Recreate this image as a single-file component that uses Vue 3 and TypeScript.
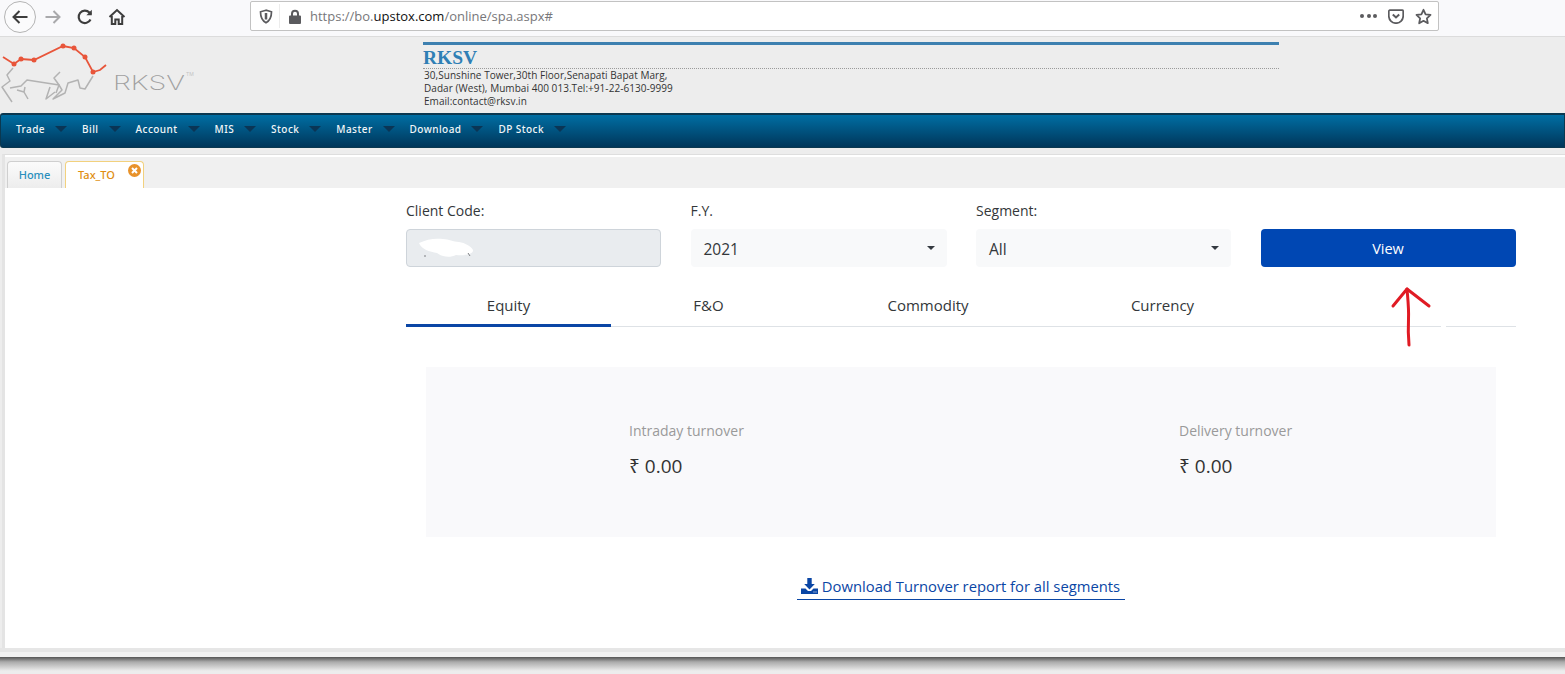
<script setup lang="ts">
const menuItems = ['Trade', 'Bill', 'Account', 'MIS', 'Stock', 'Master', 'Download', 'DP Stock']
const tabs = ['Equity', 'F&O', 'Commodity', 'Currency']
const turnovers = [
  { label: 'Intraday turnover', value: '₹ 0.00' },
  { label: 'Delivery turnover', value: '₹ 0.00' },
]
</script>

<template>
  <div class="page">
    <div class="browser-bar">
      <div class="nav-buttons">
        <span class="back-button">
          <svg width="18" height="18" viewBox="0 0 18 18" fill="none" stroke="#3d3d3d" stroke-width="2">
            <path d="M16.500 9H2.500M8.500 3 2.500 9l6 6" />
          </svg>
        </span>
        <svg class="forward" width="18" height="18" viewBox="0 0 18 18" fill="none" stroke="#a9a9ab" stroke-width="2">
          <path d="M1.500 9h14M9.500 3l6 6-6 6" />
        </svg>
        <svg class="reload" width="18" height="18" viewBox="0 0 18 18" fill="none" stroke="#3d3d3d" stroke-width="2.200">
          <path d="M14.500 11.500A6.200 6.200 0 1 1 13.400 4.600L15 6" />
          <path d="M15.800 1.800v5.400h-5.400z" fill="#3d3d3d" stroke="none" />
        </svg>
        <svg class="home" width="18" height="18" viewBox="0 0 18 18" fill="none" stroke="#3d3d3d" stroke-width="2">
          <path d="M1.500 9 9 2l7.500 7" />
          <path d="M3.800 8v8h3.500v-4.500h3.400V16h3.500V8" />
        </svg>
      </div>
      <div class="url-bar">
        <svg class="shield" width="14" height="15" viewBox="0 0 14 15" fill="none" stroke="#5b5b5e" stroke-width="1.700">
          <path d="M7 1.200 1.500 2.800c0 5 1 8.600 5.500 11 4.500-2.400 5.500-6 5.500-11z" />
          <path d="M7 4v6.500" stroke-width="2.500" />
        </svg>
        <span class="url-sep"></span>
        <svg class="lock" width="14" height="15" viewBox="0 0 14 15">
          <path d="M3 6.500V4.800a4 4 0 0 1 8 0v1.700h1a1 1 0 0 1 1 1V14a1 1 0 0 1-1 1H2a1 1 0 0 1-1-1V7.500a1 1 0 0 1 1-1zm2 0h4V4.800a2 2 0 0 0-4 0z" fill="#5b5b5e" />
        </svg>
        <span class="url-text">https://bo.<b>upstox.com</b>/online/spa.aspx#</span>
        <span class="page-dots"><i></i><i></i><i></i></span>
        <svg class="pocket" width="16" height="15" viewBox="0 0 16 15" fill="none" stroke="#5b5b5e" stroke-width="1.700">
          <path d="M1.800 1.200h12.400a1 1 0 0 1 1 1V7a7.200 7.200 0 0 1-14.400 0V2.200a1 1 0 0 1 1-1z" />
          <path d="M4.800 5.500 8 8.500l3.200-3" stroke-width="2" />
        </svg>
        <svg class="star" width="17" height="17" viewBox="0 0 17 17" fill="none" stroke="#5b5b5e" stroke-width="1.800">
          <path d="m8.500 1.800 2.100 4.500 4.900.6-3.600 3.400.9 4.900-4.300-2.400-4.300 2.400.9-4.900-3.600-3.400 4.900-.6z" stroke-linejoin="round" />
        </svg>
      </div>
    </div>

    <header class="site-header">
      <svg class="logo" width="423" height="76" viewBox="0 37 423 76" fill="none">
        <g stroke="#b3b3b3" stroke-width="1.500" stroke-linejoin="round">
          <path d="M13 68 7 75l3 6-8 6 10 15" />
          <path d="M10 88l11-2 6-6 32 5-3 8" />
          <path d="M60 72l-6 6 5 7 3 5-9 9 12-6 3-10 10-3 2 8 5 1 8-13" />
          <path d="M17 90l7 2 4 7M24 92l1-5M50 87l-4 12 9-7" />
        </g>
        <path d="M3 57l11 7 7-5 13 1 29-14 11 2 11 9 8 15 7-2 6-5" stroke="#e8553a" stroke-width="1.800" />
        <g fill="#e8553a">
          <circle cx="14" cy="64" r="2.500" />
          <circle cx="21" cy="59" r="2.500" />
          <circle cx="34" cy="60" r="2.500" />
          <circle cx="63" cy="46" r="2.500" />
          <circle cx="74" cy="48" r="2.500" />
          <circle cx="85" cy="57" r="2.500" />
          <circle cx="93" cy="72" r="2.500" />
        </g>
        <text x="113" y="90" class="logo-name" textLength="72" lengthAdjust="spacingAndGlyphs">RKSV</text>
        <text x="186" y="76" class="logo-tm">TM</text>
      </svg>
      <div class="company">
        <h1 class="company-name">RKSV</h1>
        <p class="company-address">
          30,Sunshine Tower,30th Floor,Senapati Bapat Marg,<br />
          Dadar (West), Mumbai 400 013.Tel:+91-22-6130-9999<br />
          Email:contact@rksv.in
        </p>
      </div>
    </header>

    <nav class="menu">
      <a v-for="item in menuItems" :key="item" class="menu-item">
        {{ item }}<span class="menu-caret"></span>
      </a>
    </nav>

    <div class="panel-wrap">
      <div class="panel">
        <div class="tab-strip">
          <span class="page-tab">Home</span>
          <span class="page-tab active">
            Tax_TO
            <svg class="tab-close" width="13" height="13" viewBox="0 0 13 13">
              <circle cx="6.500" cy="6.500" r="6.500" fill="#e8922a" />
              <path d="m4 4 5 5M9 4 4 9" stroke="#fff" stroke-width="2" />
            </svg>
          </span>
        </div>

        <main class="content">
          <div class="filters">
            <div class="field">
              <label>Client Code:</label>
              <div class="client-input">
                <svg class="redact" width="60" height="24" viewBox="0 0 60 24">
                  <path d="M1 6c8-4 16-5 24-4 6 0 10 3 16 3 6 1 12 4 14 8 1 4-8 6-17 5-6 3-14 2-19-2C12 15 3 12 1 6z" fill="#fff" />
                  <path d="M6 19h2M50 16l2 3" stroke="#7d7f82" stroke-width="1" />
                </svg>
              </div>
            </div>
            <div class="field">
              <label>F.Y.</label>
              <div class="select-box">2021<span class="select-caret"></span></div>
            </div>
            <div class="field">
              <label>Segment:</label>
              <div class="select-box">All<span class="select-caret"></span></div>
            </div>
            <button class="view-button">View</button>
          </div>

          <div class="tabs">
            <span v-for="(tab, i) in tabs" :key="tab" class="tab" :class="{ selected: i === 0 }">{{ tab }}</span>
          </div>

          <section class="turnover-box">
            <div v-for="t in turnovers" :key="t.label" class="turnover">
              <span class="turnover-label">{{ t.label }}</span>
              <span class="turnover-value">{{ t.value }}</span>
            </div>
          </section>

          <div class="download-row">
            <a class="download-link">
              <svg width="17" height="16" viewBox="0 0 17 16" fill="#0a46a5">
                <path d="M6.300 0h4.400v6h3.100L8.500 11.400 3.200 6h3.100z" />
                <path d="M0 10.500h4.500l2.500 2.500h3l2.500-2.500H17V16H0zm12.500 3v1h1v-1zm2 0v1h1v-1z" fill-rule="evenodd" />
              </svg>
              Download Turnover report for all segments
            </a>
          </div>
        </main>
      </div>
      <div class="panel-bottom"></div>
      <div class="panel-shadow"></div>
    </div>

    <svg class="annotation" width="60" height="70" viewBox="0 0 60 70" fill="none">
      <path d="M52 41h5" stroke="#fff" stroke-width="2" />
      <path d="M4 21 18 4l22 17" stroke="#e01b24" stroke-width="3" stroke-linecap="round" stroke-linejoin="round" />
      <path d="M18 4c1 12 2 20 1.500 30-.5 10 0 20 .5 26" stroke="#e01b24" stroke-width="3" stroke-linecap="round" />
    </svg>
  </div>
</template>

<style>
html,
body {
  margin: 0;
  overflow: hidden;
  background: #ededed;
}
</style>

<style scoped>
.page {
  position: relative;
  width: 1565px;
  height: 674px;
  display: flex;
  flex-direction: column;
  font-family: "Open Sans", "Noto Sans", sans-serif;
  color: #212529;
  overflow: hidden;
}

.browser-bar {
  height: 36px;
  flex-shrink: 0;
  display: flex;
  align-items: flex-start;
  background: #f9f9fb;
  border-bottom: 1px solid #dcdcdc;
}

.nav-buttons {
  width: 250px;
  height: 33px;
  display: flex;
  align-items: center;
  padding-left: 4px;
  box-sizing: border-box;
}

.back-button {
  width: 32px;
  height: 32px;
  border: 1px solid #b4b4b4;
  border-radius: 50%;
  background: #fbfbfc;
  display: flex;
  align-items: center;
  justify-content: center;
  box-sizing: border-box;
}

.forward {
  margin-left: 8px;
}

.reload {
  margin-left: 14px;
}

.home {
  margin-left: 14px;
}

.url-bar {
  width: 1189px;
  height: 30px;
  margin-top: 1px;
  display: flex;
  align-items: center;
  background: #fff;
  border: 1px solid #c2c2c2;
  border-radius: 2px;
  box-sizing: border-box;
}

.shield {
  margin-left: 8px;
}

.url-sep {
  width: 1px;
  height: 24px;
  background: #ececec;
  margin: 0 8px 0 6px;
}

.lock {
  flex-shrink: 0;
}

.url-text {
  margin-left: 8px;
  font-size: 13px;
  color: #77777a;
  flex: 1;
}

.url-text b {
  font-weight: 400;
  color: #111;
}

.page-dots {
  display: flex;
  gap: 2.500px;
  margin-right: 11px;
}

.page-dots i {
  width: 4px;
  height: 4px;
  border-radius: 50%;
  background: #5b5b5e;
}

.pocket {
  margin-right: 11px;
}

.star {
  margin-right: 6px;
}

.site-header {
  height: 76px;
  flex-shrink: 0;
  display: flex;
  background: #ededed;
}

.logo {
  flex-shrink: 0;
}

.logo-name {
  font-family: "Inter", sans-serif;
  font-size: 20px;
  font-weight: 200;
  fill: #a0a0a0;
}

.logo-tm {
  font-family: "Inter", sans-serif;
  font-size: 5px;
  fill: #c4c4c4;
}

.company {
  width: 856px;
  margin-top: 5px;
  border-top: 3px solid #3d80b0;
  box-sizing: border-box;
}

.company-name {
  margin: 0;
  height: 23px;
  font-family: "Liberation Serif", serif;
  font-size: 19.500px;
  line-height: 25px;
  font-weight: 700;
  color: #2f7fb5;
  border-bottom: 1px dotted #9a9a9a;
  box-sizing: content-box;
}

.company-address {
  margin: 0;
  padding: 0 0 0 1px;
  font-size: 10px;
  letter-spacing: 0.05px;
  line-height: 13px;
  color: #333;
}

.menu {
  height: 35px;
  flex-shrink: 0;
  display: flex;
  align-items: center;
  padding: 0 0 4px 15px;
  box-sizing: border-box;
  background: linear-gradient(#006ea3, #00365a);
  border: 1px solid #0b3850;
  border-top: 2px solid #0b3850;
  border-radius: 3px 0 0 3px;
}

.menu-item {
  display: flex;
  align-items: center;
  margin-right: 15px;
  font-family: "Noto Sans", sans-serif;
  font-size: 10px;
  font-weight: 500;
  letter-spacing: 0.45px;
  color: #f2f6f8;
}

.menu-caret {
  width: 0;
  height: 0;
  margin-left: 10px;
  border-left: 6px solid transparent;
  border-right: 6px solid transparent;
  border-top: 6px solid #0a3555;
}

.panel-wrap {
  flex: 1;
  display: flex;
  flex-direction: column;
  padding-top: 6px;
  min-height: 0;
  background: #ededed;
}

.panel {
  height: 494px;
  flex-shrink: 0;
  margin-left: 2px;
  display: flex;
  flex-direction: column;
  border-top: 1px solid #dedede;
  border-left: 3px solid #e4e4e4;
  background: #fff;
  box-sizing: border-box;
}

.tab-strip {
  height: 31px;
  margin-top: 2px;
  flex-shrink: 0;
  display: flex;
  align-items: flex-end;
  gap: 3px;
  padding-left: 2px;
  background: #f0f0f0;
}

.page-tab {
  position: relative;
  width: 55px;
  height: 27px;
  padding-bottom: 2px;
  display: flex;
  align-items: center;
  justify-content: center;
  font-family: "Noto Sans", sans-serif;
  font-size: 11px;
  font-weight: 500;
  color: #2a8fbd;
  background: linear-gradient(#fbfbfb, #ededed);
  border: 1px solid #cfcfcf;
  border-bottom: 0;
  border-radius: 4px 4px 0 0;
  box-sizing: border-box;
}

.page-tab.active {
  width: 79px;
  padding-right: 16px;
  color: #e08e10;
  background: #fff;
  border-color: #f2d17e;
}

.tab-close {
  position: absolute;
  top: 2px;
  right: 2px;
}

.content {
  margin-left: 401px;
  width: 1110px;
  display: flex;
  flex-direction: column;
}

.filters {
  margin-top: 12px;
  display: grid;
  grid-template-columns: 255px 256px 255px 255px;
  column-gap: 29.500px;
  align-items: end;
}

.field label {
  display: block;
  height: 29px;
  font-size: 14px;
  line-height: 22px;
  color: #33373a;
}

.client-input {
  position: relative;
  height: 38px;
  background: #e9ecef;
  border: 1px solid #ced4da;
  border-radius: 4px;
  box-sizing: border-box;
}

.redact {
  position: absolute;
  left: 11px;
  top: 7px;
}

.select-box {
  height: 38px;
  padding: 2px 13px 0;
  box-sizing: border-box;
  display: flex;
  align-items: center;
  justify-content: space-between;
  background: #f8f9fa;
  border-radius: 4px;
  font-size: 15.500px;
  color: #33373a;
}

.select-caret {
  width: 0;
  height: 0;
  margin: -3px -1px 0 0;
  border-left: 4px solid transparent;
  border-right: 4px solid transparent;
  border-top: 4px solid #343a40;
}

.view-button {
  height: 38px;
  border: 0;
  border-radius: 4px;
  background: #0047b3;
  color: #fff;
  font-family: inherit;
  font-size: 14.500px;
}

.tabs {
  margin-top: 20px;
  height: 40px;
  display: grid;
  grid-template-columns: 205px 195px 244px 225px;
  border-bottom: 1px solid #dee2e6;
  box-sizing: border-box;
}

.tab {
  height: 37px;
  padding-bottom: 2px;
  box-sizing: border-box;
  display: flex;
  align-items: center;
  justify-content: center;
  font-size: 15px;
  color: #33373a;
}

.tab.selected {
  height: 40px;
  padding-bottom: 2px;
  border-bottom: 3px solid #0a46a5;
}

.turnover-box {
  height: 170px;
  margin: 40px 20px 0;
  padding-top: 53px;
  box-sizing: border-box;
  display: flex;
  background: #f9f9fb;
}

.turnover {
  flex: 0 0 550px;
  padding-left: 203px;
  box-sizing: border-box;
  display: flex;
  flex-direction: column;
  white-space: nowrap;
}

.turnover-label {
  font-size: 14px;
  line-height: 22px;
  color: #9a9a9a;
}

.turnover-value {
  margin-top: 12px;
  font-size: 19px;
  line-height: 24px;
  color: #333;
}

.download-row {
  margin-top: 39px;
  display: flex;
  justify-content: center;
}

.download-link {
  display: flex;
  align-items: center;
  gap: 4px;
  height: 24px;
  padding: 0 5px 4px 4px;
  box-sizing: border-box;
  font-size: 14.800px;
  color: #0a46a5;
  border-bottom: 1px solid #0a46a5;
}

.panel-bottom {
  height: 9px;
  flex-shrink: 0;
  background: linear-gradient(#e6e6e6 0 45%, #f2f2f2 45%);
}

.panel-shadow {
  height: 14px;
  flex-shrink: 0;
  background: linear-gradient(#555, #aaa 35%, #ededed);
}

.annotation {
  position: absolute;
  left: 1389px;
  top: 285px;
  pointer-events: none;
}
</style>
